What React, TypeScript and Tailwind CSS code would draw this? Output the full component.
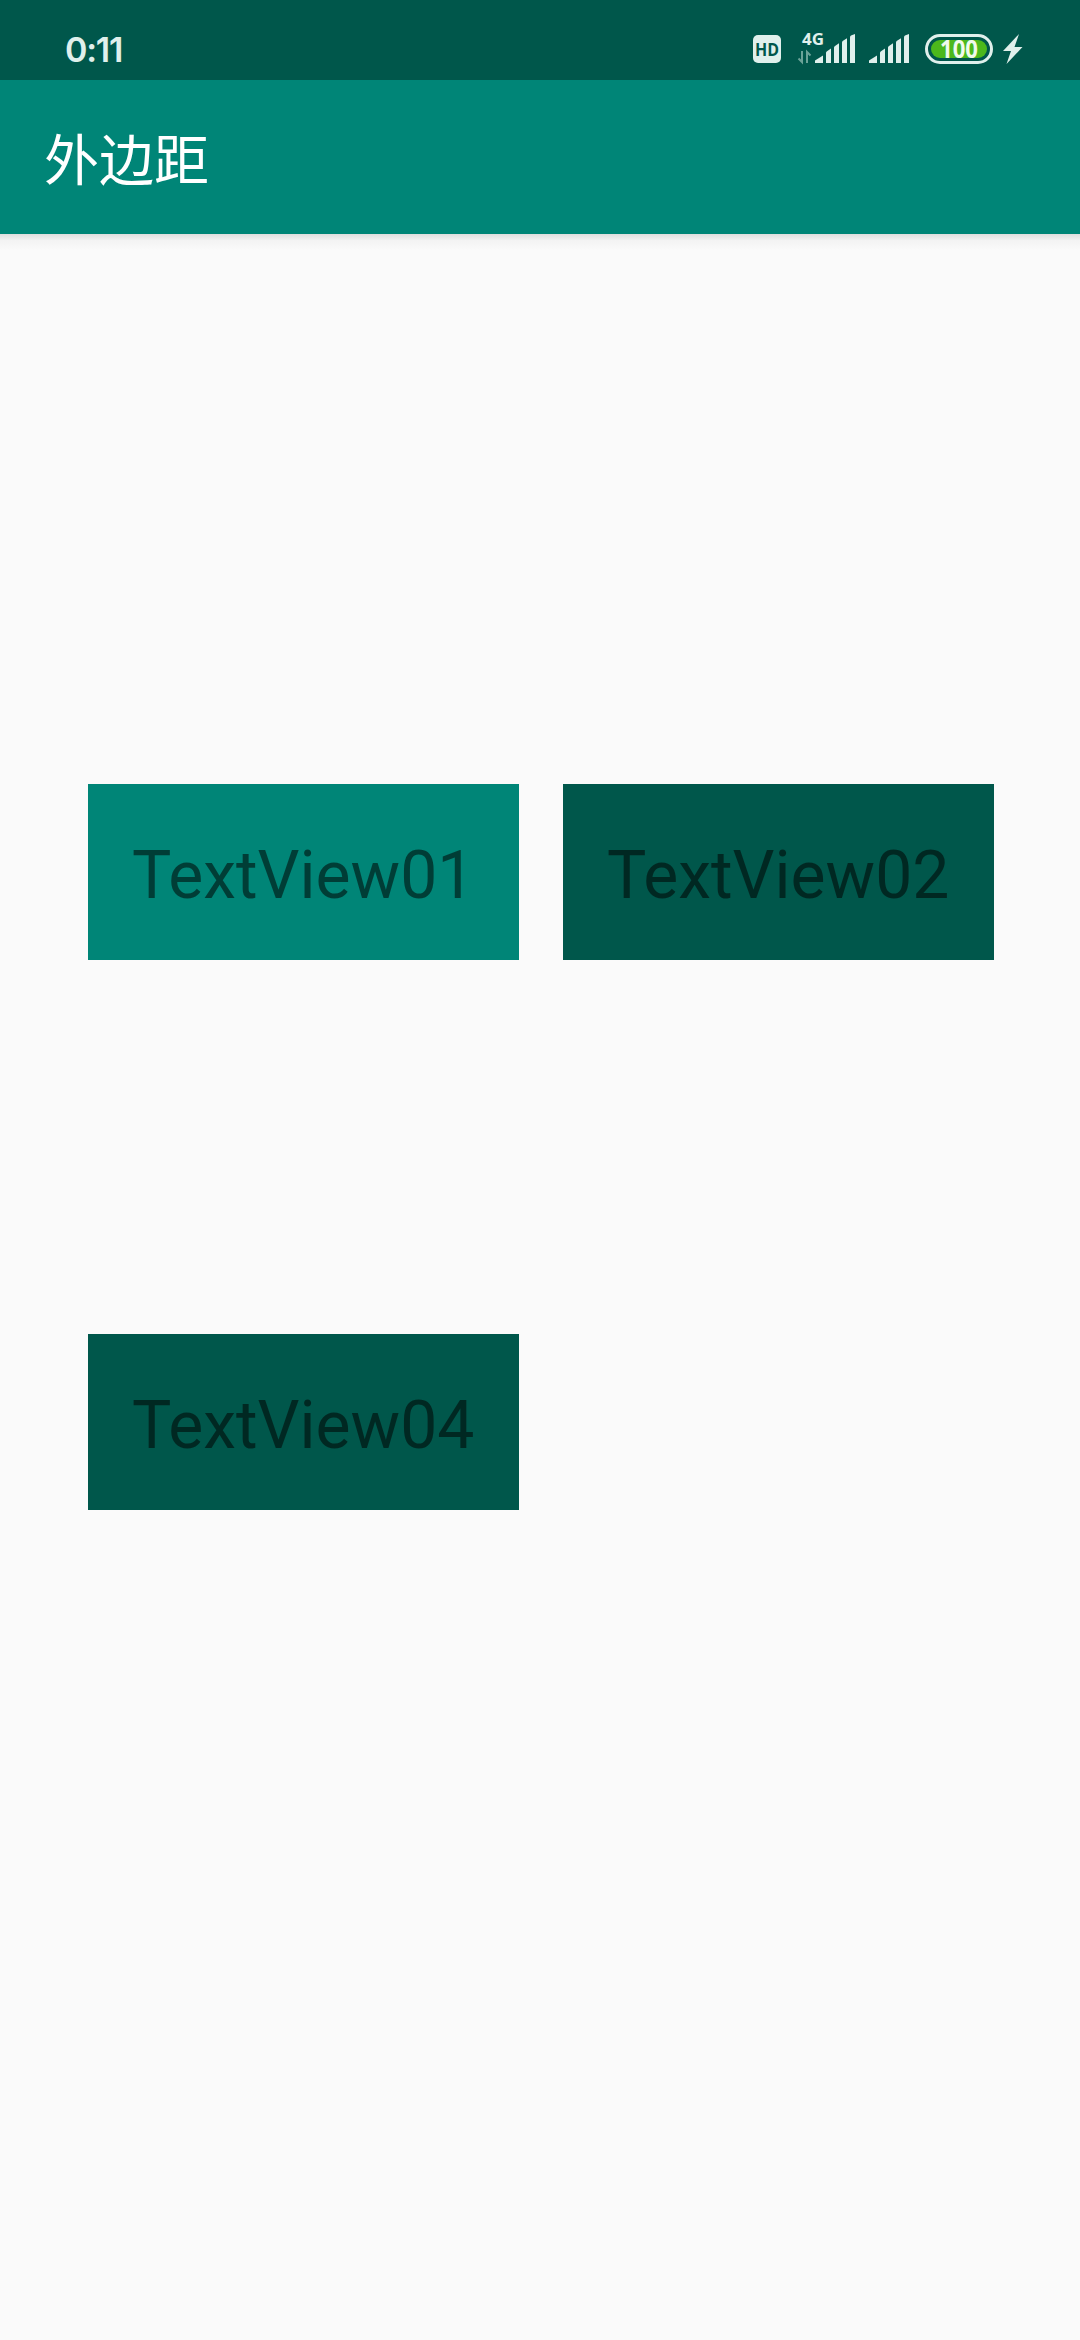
function Signal({ className }: { className: string }) {
  return (
    <svg viewBox="0 0 40 30" className={`h-[30px] w-10 shrink-0 ${className}`} fill="#e0f0ec">
      <path d="M0 29v-2.500l8-5V29z" />
      <path d="M11 29V18.800q0-1 1-1.600l4-2.600V29z" />
      <path d="M19 29V13.500q0-1 1-1.600l4-2.600V29z" />
      <path d="M27 29V8.400q0-1 1-1.600l4-2.600V29z" />
      <path d="M35 29V3.200q0-1 1-1.600L40 0V29z" />
    </svg>
  );
}

function StatusBar() {
  return (
    <div className="flex h-20 shrink-0 items-start bg-[#00574b] pl-[65px] pt-[34px] text-[#e0f0ec]">
      <span className="w-[100px] font-['Inter',sans-serif] text-[34px] font-semibold leading-[31px] tracking-[-1.2px]">
        0:11
      </span>
      <svg viewBox="0 0 28 28" className="ml-auto mt-px size-7 shrink-0 overflow-visible">
        <rect width="28" height="28" rx="5" fill="#e0f0ec" />
        <text x="14" y="20.500" textAnchor="middle" textLength="24" lengthAdjust="spacingAndGlyphs" fill="#00574b" className="font-['Open_Sans',sans-serif] text-[18px] font-bold">
          HD
        </text>
      </svg>
      <svg viewBox="0 0 34 32" className="-mt-0.5 ml-[17px] h-8 w-[34px] shrink-0 overflow-visible">
        <text x="4" y="12.500" textLength="22" lengthAdjust="spacingAndGlyphs" fill="#e0f0ec" className="font-['Open_Sans',sans-serif] text-[16px] font-bold">
          4G
        </text>
        <path d="M4 19v11L0.500 26.500M9 31V20L12.500 23.500" fill="none" stroke="#6ba398" strokeWidth="2" />
      </svg>
      <Signal className="-ml-[17px]" />
      <Signal className="ml-[14px]" />
      <svg viewBox="0 0 68 30" className="ml-4 h-[30px] w-[68px] shrink-0 overflow-visible">
        <rect x="1.500" y="1.500" width="65" height="27" rx="13.500" fill="none" stroke="#e0f0ec" strokeWidth="3" />
        <rect x="6" y="6" width="56" height="18" rx="9" fill="#4cb81c" />
        <text x="34" y="24" textAnchor="middle" textLength="38" lengthAdjust="spacingAndGlyphs" fill="#f1faec" className="font-['Open_Sans',sans-serif] text-[25px] font-bold">
          100
        </text>
      </svg>
      <svg viewBox="0 0 20 30" className="ml-[10px] mr-[57px] h-[30px] w-5 shrink-0" fill="#e0f0ec">
        <path d="M16 0 0 17h8L3.500 30 19.500 13h-8z" />
      </svg>
    </div>
  );
}

function TextView({ label, className }: { label: string; className: string }) {
  return (
    <div className={`h-44 w-[431px] whitespace-nowrap px-11 pb-10 pt-12 font-['Roboto',sans-serif] text-[66px] leading-[88px] text-black/54 ${className}`}>
      {label}
    </div>
  );
}

export default function App() {
  return (
    <div className="flex h-[2340px] w-[1080px] flex-col overflow-hidden bg-[#fafafa]">
      <StatusBar />
      <header className="flex h-[154px] shrink-0 items-center bg-[#008577] pb-[3px] pl-11">
        <h1 className="font-['Noto_Sans_CJK_SC',sans-serif] text-[55px] leading-[80px] text-white">外边距</h1>
      </header>
      <div className="h-4 shrink-0 bg-linear-to-b from-[#dedede] via-[#f3f3f3] via-40% to-[#fafafa]" />
      <main className="grid grid-cols-[431px_431px] content-start gap-x-11 gap-y-[374px] pl-[88px] pt-[534px]">
        <TextView label="TextView01" className="bg-[#008577]" />
        <TextView label="TextView02" className="bg-[#00574b]" />
        <TextView label="TextView04" className="bg-[#00574b]" />
      </main>
    </div>
  );
}
